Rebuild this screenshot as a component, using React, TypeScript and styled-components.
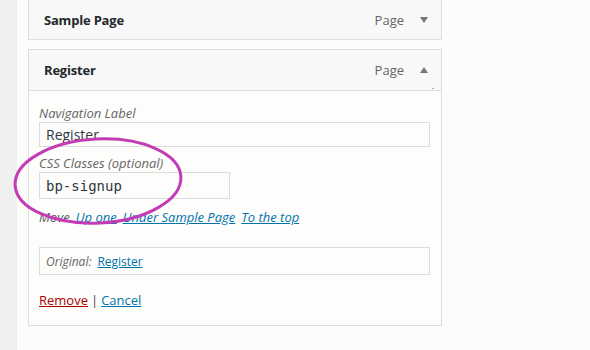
import React from "react";
import styled, { createGlobalStyle } from "styled-components";

const Global = createGlobalStyle`
  html, body { margin: 0; padding: 0; background: #fcfcfb; }
  body { font-family: "Open Sans", "Noto Sans", sans-serif; color: #23282d; }
  * { box-sizing: border-box; }
`;

const Page = styled.div`
  display: flex;
  width: 590px;
  height: 350px;
  overflow: hidden;
  background: #fcfcfb;
  position: relative;
`;

const Strip = styled.div`
  width: 17px;
  flex: none;
  background: #f0f0ef;
`;

const Main = styled.div`
  padding-left: 11px;
  display: flex;
  flex-direction: column;
  gap: 9px;
`;

const Card = styled.div<{ $noTop?: boolean }>`
  width: 414px;
  border: 1px solid #dedede;
  border-top: ${(p) => (p.$noTop ? "none" : "1px solid #dedede")};
  background: #fdfdfc;
`;

const Header = styled.div<{ $h: number; $open?: boolean }>`
  height: ${(p) => p.$h}px;
  display: flex;
  align-items: center;
  padding: 0 13px 0 15px;
  background: #f7f8f7;
  border-bottom: ${(p) => (p.$open ? "1px solid #dedede" : "none")};
  position: relative;
`;

const Title = styled.span`
  font-weight: 700;
  font-size: 13px;
  flex: 1;
  letter-spacing: -0.2px;
`;

const Type = styled.span`
  font-size: 13px;
  color: #666;
  margin-right: 16px;
`;

const Arrow = styled.span<{ $up?: boolean }>`
  width: 0;
  height: 0;
  border-left: 4px solid transparent;
  border-right: 4px solid transparent;
  ${(p) =>
    p.$up
      ? "border-bottom: 6px solid #72777c;"
      : "border-top: 6px solid #72777c;"}
`;

const Body = styled.div`
  padding: 13px 11px 16px 10px;
  display: flex;
  flex-direction: column;
`;

const Label = styled.div`
  font-size: 13px;
  font-style: italic;
  color: #666;
  line-height: 18px;
`;

const Input = styled.div<{ $w?: number; $h: number; $mono?: boolean }>`
  width: ${(p) => (p.$w ? `${p.$w}px` : "100%")};
  height: ${(p) => p.$h}px;
  border: 1px solid #dcdcdc;
  background: #fdfdfc;
  display: flex;
  align-items: center;
  padding: 0 6px;
  font-size: 14px;
  color: #32373c;
  font-family: ${(p) =>
    p.$mono ? '"DejaVu Sans Mono", monospace' : '"Open Sans", sans-serif'};
`;

const Field = styled.div<{ $mt: number }>`
  margin-top: ${(p) => p.$mt}px;
  display: flex;
  flex-direction: column;
`;

const MoveRow = styled.div`
  margin-top: 9px;
  font-size: 13px;
  font-style: italic;
  line-height: 18px;
  color: #555;
  display: flex;
  gap: 6px;
`;

const Link = styled.a<{ $danger?: boolean }>`
  color: ${(p) => (p.$danger ? "#aa0000" : "#0073aa")};
  text-decoration: underline;
  cursor: pointer;
`;

const Original = styled.div`
  margin-top: 21px;
  height: 28px;
  border: 1px solid #dcdcdc;
  display: flex;
  align-items: center;
  padding: 0 6px;
  font-size: 12px;
  gap: 6px;
`;

const OrigLabel = styled.span`
  font-style: italic;
  color: #666;
`;

const Actions = styled.div`
  margin-top: 16px;
  font-size: 13px;
  line-height: 18px;
  color: #444;
  display: flex;
  gap: 3px;
`;

const Mark = styled.svg`
  position: absolute;
  left: 0;
  top: 0;
  pointer-events: none;
`;

const Tick = styled.span`
  position: absolute;
  right: 7px;
  bottom: 1px;
  width: 2px;
  height: 1px;
  background: #8fb7d4;
`;

export default function App() {
  return (
    <>
      <Global />
      <Page>
        <Strip />
        <Main>
          <Card $noTop>
            <Header $h={39}>
              <Title>Sample Page</Title>
              <Type>Page</Type>
              <Arrow />
            </Header>
          </Card>
          <Card>
            <Header $h={41} $open>
              <Title>Register</Title>
              <Type>Page</Type>
              <Arrow $up />
              <Tick />
            </Header>
            <Body>
              <Field $mt={0}>
                <Label>Navigation Label</Label>
                <Input $h={25}>Register</Input>
              </Field>
              <Field $mt={7}>
                <Label>CSS Classes (optional)</Label>
                <Input $h={27} $w={191} $mono>
                  bp-signup
                </Input>
              </Field>
              <MoveRow>
                <span>Move</span>
                <Link>Up one</Link>
                <Link>Under Sample Page</Link>
                <Link>To the top</Link>
              </MoveRow>
              <Original>
                <OrigLabel>Original:</OrigLabel>
                <Link>Register</Link>
              </Original>
              <Actions>
                <Link $danger>Remove</Link>
                <span>|</span>
                <Link>Cancel</Link>
              </Actions>
            </Body>
          </Card>
        </Main>
        <Mark width="590" height="350">
          <ellipse
            cx="98"
            cy="181"
            rx="83"
            ry="42"
            fill="none"
            stroke="#c43cb4"
            strokeWidth="3"
            transform="rotate(-3 98 181)"
          />
        </Mark>
      </Page>
    </>
  );
}
